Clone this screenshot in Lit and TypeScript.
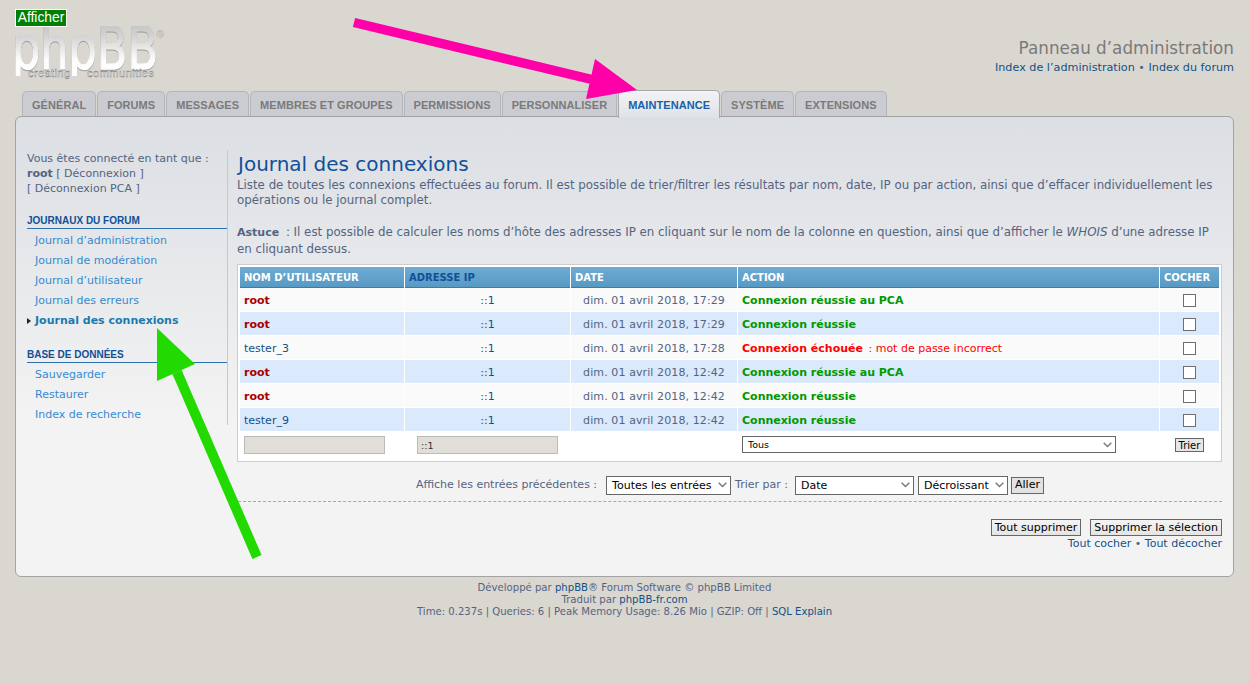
import { LitElement, html, css } from "lit";
import { customElement } from "lit/decorators.js";

const tabs = ["Général","Forums","Messages","Membres et groupes","Permissions","Personnaliser","Maintenance","Système","Extensions"];
const rows = [
  { u: "root", admin: true, d: "dim. 01 avril 2018, 17:29", a: "Connexion réussie au PCA", ok: true },
  { u: "root", admin: true, d: "dim. 01 avril 2018, 17:29", a: "Connexion réussie", ok: true },
  { u: "tester_3", admin: false, d: "dim. 01 avril 2018, 17:28", a: "Connexion échouée", ok: false },
  { u: "root", admin: true, d: "dim. 01 avril 2018, 12:42", a: "Connexion réussie au PCA", ok: true },
  { u: "root", admin: true, d: "dim. 01 avril 2018, 12:42", a: "Connexion réussie", ok: true },
  { u: "tester_9", admin: false, d: "dim. 01 avril 2018, 12:42", a: "Connexion réussie", ok: true },
];

@customElement("app-root")
export class AppRoot extends LitElement {
  static styles = css`
    :host { display: block; position: relative; height: 683px; overflow: hidden; background: #dad7d0; font-family: "DejaVu Sans", Verdana, sans-serif; font-size: 11px; color: #536482; box-sizing: border-box; padding: 0 15px; }
    * { box-sizing: border-box; }
    a { color: #105289; text-decoration: none; }
    .skip { position: absolute; left: 15px; top: 9px; width: 52px; height: 18px; background: #008000; border: 1px solid #fff; color: #fff; font: 13.8px/16px "Liberation Sans", Arial, sans-serif; text-align: center; z-index: 2; }
    .head { height: 91px; display: flex; justify-content: space-between; align-items: flex-start; }
    .logo { display: block; margin-top: 26px; overflow: visible; }
    .lg { filter: drop-shadow(0 1px 0 #999); }
    .brand { margin-top: 39px; text-align: right; }
    .brand h1 { margin: 0; font-size: 16.8px; line-height: 18px; font-weight: normal; color: #7a7a7a; }
    .brand div { font-size: 11.2px; line-height: 14px; margin-top: 4px; }
    .tabs { display: flex; gap: 1px; padding-left: 7px; height: 25px; position: relative; z-index: 1; align-items: flex-end; }
    .tab { height: 25px; padding: 0 9px; background: #cbccd1; border: 1px solid #b4b5ba; border-bottom: none; border-radius: 5px 5px 0 0; font: bold 11px/26px "Liberation Sans", Arial, sans-serif; letter-spacing: .06px; text-transform: uppercase; color: #7a7a7a; white-space: nowrap; }
    .tab.on { height: 28px; margin-bottom: -2px; background: linear-gradient(#f2f3f5, #dfe2e6); border-color: #a8a8a8; color: #1a5fa8; line-height: 28px; }
    .panel { height: 461px; border: 1px solid #a3a3a3; border-radius: 6px; background: linear-gradient(#dbdee3 0, #f3f3f3 300px); padding: 33px 11px 0 11px; display: flex; align-items: flex-start; }
    .side { width: 201px; height: 275px; flex: none; border-right: 1px solid #c6c8cc; }
    .who { line-height: 15px; height: 64px; padding-top: 1px; padding-right: 6px; }
    .who a { color: #536482; }
    .mhead { font: bold 10px/12px "Liberation Sans", Arial, sans-serif; color: #115098; text-transform: uppercase; border-bottom: 1px solid #2a71ad; width: 200px; padding: 1px 0; }
    .menu { padding: 2px 0 0 8px; margin: 0 0 17px; list-style: none; }
    .menu li { height: 20px; line-height: 20px; color: #368ad2; position: relative; }
    .menu li.on { font-weight: bold; color: #1a7ab0; }
    .menu li.on::before { content: ""; position: absolute; left: -8px; top: 7px; border-left: 4px solid #222; border-top: 3px solid transparent; border-bottom: 3px solid transparent; }
    .main { flex: 1; min-width: 0; padding-left: 9px; }
    .main h2 { margin: 0; padding: 2px 0 0 1px; font-size: 20px; line-height: 24px; font-weight: normal; color: #115098; height: 28px; }
    .main p { margin: 0; font-size: 11.8px; }
    .p1 { height: 46px; line-height: 15px; }
    .p2 { height: 40px; line-height: 16px; }
    .p2 b { font-size: 11px; margin-right: 3px; }
    .tw { border: 1px solid #ccc; background: #fff; padding: 2px 1px; height: 198px; }
    table { width: 981px; border-spacing: 1px 0; border-collapse: separate; table-layout: fixed; margin: 0; }
    th { height: 21px; padding: 1px 4px 0; background: linear-gradient(#6dabd2, #5899c4); border-bottom: 1px solid #3f7ba6; font: bold 10px/18px "DejaVu Sans", sans-serif; color: #fff; text-transform: uppercase; text-align: left; white-space: nowrap; }
    th.cur { color: #115098; }
    td { height: 24px; padding: 1px 4px 0; color: #536482; border-bottom: 1px solid #fff; white-space: nowrap; background: #fafafa; }
    tr.alt td { background: #dbe9fc; }
    .adm { color: #a00; font-weight: bold; }
    .usr { color: #105289; }
    .ip { text-align: center; padding-left: 0; padding-right: 0; }
    .dt { text-align: center; letter-spacing: .1px; }
    .ok { color: #090; font-weight: bold; }
    .ko { color: #f00; }
    .ko b { margin-right: 2px; }
    .chk { text-align: center; padding: 1px 0 0; }
    .chk input { appearance: none; margin: 0; width: 13px; height: 13px; vertical-align: middle; background: #fff; border: 1px solid #6e6e6e; }
    .frow td { background: #fff; border: none; height: 26px; padding: 0 4px; }
    .txt { display: block; height: 18px; width: 141px; background: #e1ddd7; border: 1px solid #bbb; padding: 0 3px; font: 9.5px "DejaVu Sans", sans-serif; color: #333; }
    .txt.mid { margin-left: 8px; }
    select { appearance: none; font-family: "DejaVu Sans", sans-serif; font-size: 11px; height: 19px; border: 1px solid #666; color: #000; padding: 0 14px 0 5px; border-radius: 0; background: #fff url("data:image/svg+xml,%3Csvg xmlns='http://www.w3.org/2000/svg' width='9' height='6'%3E%3Cpath d='M.7.7 4.5 4.5 8.3.7' fill='none' stroke='%23777' stroke-width='1.4'/%3E%3C/svg%3E") no-repeat right 3px center; }
    .frow select { display: block; width: 374px; height: 17px; font-size: 9.5px; margin-top: -1px; }
    .btn { font: 11px/14px "DejaVu Sans", sans-serif; background: linear-gradient(#f4f4f4, #e4e4e4); border: 1px solid #666; color: #000; padding: 0 3px; height: 17px; }
    .btn.s { font-size: 10px; width: 29px; height: 14px; padding: 0; line-height: 11px; background: #e6e6e6; display: block; margin: 0 auto; }
    .sort { display: flex; justify-content: flex-end; align-items: center; height: 26px; margin-top: 10px; padding-right: 178px; gap: 4px; }
    .sort span { position: relative; top: -1px; }
    .sort .lead { margin-right: 5px; }
    .sort .par { margin-right: 3px; }
    .sort .go { margin-left: -1px; width: 33px; background: #e2e2e2; padding: 0; }
    .w1 { width: 125px; }
    .w2 { width: 119px; }
    .w3 { width: 90px; }
    .dash { border-top: 1px dashed #a8a8a8; margin-top: 3px; margin-left: 1px; }
    .actions { display: flex; justify-content: flex-end; gap: 9px; margin-top: 17px; }
    .marks { text-align: right; line-height: 14px; margin-top: 1px; }
    footer { text-align: center; font-size: 10.1px; line-height: 12px; margin-top: 5px; color: #536482; }
    .over { position: absolute; left: 0; top: 0; z-index: 3; pointer-events: none; }
  `;

  render() {
    return html`
      <div class="skip">Afficher</div>
      <div class="head">
        <svg class="logo" width="152" height="64" viewBox="0 0 152 64" role="img" aria-label="phpBB">
          <defs>
            <linearGradient id="lg" x1="0" y1="0" x2="0" y2="1">
              <stop offset="0" stop-color="#bcbcbc" />
              <stop offset=".3" stop-color="#d2d2d2" />
              <stop offset=".66" stop-color="#fcfcfc" />
              <stop offset="1" stop-color="#ffffff" />
            </linearGradient>
            <clipPath id="lc"><rect x="-4" y="0" width="156" height="50" /></clipPath>
          </defs>
          <g clip-path="url(#lc)">
            <text class="lg" x="-3" y="43" font-family="DejaVu Sans" font-size="58" textLength="146" lengthAdjust="spacingAndGlyphs" fill="url(#lg)" stroke="url(#lg)" stroke-width="1.5">phpBB</text>
          </g>
          <text x="140" y="12" font-family="DejaVu Sans" font-size="10" fill="#f2f2f2" stroke="#8a8a8a" stroke-width=".25">®</text>
          <text x="13" y="51" font-family="Liberation Sans" font-size="11" fill="#fff" stroke="#777" stroke-width=".4" textLength="42">creating</text>
          <text x="72" y="51" font-family="Liberation Sans" font-size="11" fill="#fff" stroke="#777" stroke-width=".4" textLength="67">communities</text>
        </svg>
        <div class="brand">
          <h1>Panneau d’administration</h1>
          <div><a>Index de l’administration</a> • <a>Index du forum</a></div>
        </div>
      </div>
      <div class="tabs">
        ${tabs.map((t) => html`<div class="tab ${t === "Maintenance" ? "on" : ""}">${t}</div>`)}
      </div>
      <div class="panel">
        <div class="side">
          <div class="who">Vous êtes connecté en tant que :<br /><b>root</b> [ <a>Déconnexion</a> ]<br />[ <a>Déconnexion PCA</a> ]</div>
          <div class="mhead">Journaux du forum</div>
          <ul class="menu">
            <li>Journal d’administration</li>
            <li>Journal de modération</li>
            <li>Journal d’utilisateur</li>
            <li>Journal des erreurs</li>
            <li class="on">Journal des connexions</li>
          </ul>
          <div class="mhead">Base de données</div>
          <ul class="menu">
            <li>Sauvegarder</li>
            <li>Restaurer</li>
            <li>Index de recherche</li>
          </ul>
        </div>
        <div class="main">
          <h2>Journal des connexions</h2>
          <p class="p1">Liste de toutes les connexions effectuées au forum. Il est possible de trier/filtrer les résultats par nom, date, IP ou par action, ainsi que d’effacer individuellement les opérations ou le journal complet.</p>
          <p class="p2"><b>Astuce</b> : Il est possible de calculer les noms d’hôte des adresses IP en cliquant sur le nom de la colonne en question, ainsi que d’afficher le <i>WHOIS</i> d’une adresse IP en cliquant dessus.</p>
          <div class="tw">
            <table>
              <colgroup><col style="width:164px" /><col style="width:165px" /><col style="width:166px" /><col style="width:421px" /><col style="width:59px" /></colgroup>
              <thead><tr><th>Nom d’utilisateur</th><th class="cur">Adresse IP</th><th>Date</th><th>Action</th><th>Cocher</th></tr></thead>
              <tbody>
                ${rows.map((r, i) => html`
                  <tr class="${i % 2 ? "alt" : ""}">
                    <td class="${r.admin ? "adm" : "usr"}">${r.u}</td>
                    <td class="ip"><a>::1</a></td>
                    <td class="dt">${r.d}</td>
                    <td>${r.ok ? html`<span class="ok">${r.a}</span>` : html`<span class="ko"><b>${r.a}</b> : mot de passe incorrect</span>`}</td>
                    <td class="chk"><input type="checkbox" /></td>
                  </tr>`)}
                <tr class="frow">
                  <td><input class="txt" /></td>
                  <td><input class="txt mid" value="::1" /></td>
                  <td></td>
                  <td><select><option>Tous</option></select></td>
                  <td class="chk"><button class="btn s">Trier</button></td>
                </tr>
              </tbody>
            </table>
          </div>
          <div class="sort">
            <span class="lead">Affiche les entrées précédentes :</span>
            <select class="w1"><option>Toutes les entrées</option></select>
            <span class="par">Trier par :</span>
            <select class="w2"><option>Date</option></select>
            <select class="w3"><option>Décroissant</option></select>
            <button class="btn go">Aller</button>
          </div>
          <div class="dash"></div>
          <div class="actions"><button class="btn">Tout supprimer</button><button class="btn">Supprimer la sélection</button></div>
          <div class="marks"><a>Tout cocher</a> • <a>Tout décocher</a></div>
        </div>
      </div>
      <footer>
        <div>Développé par <a>phpBB</a>® Forum Software © phpBB Limited</div>
        <div>Traduit par <a>phpBB-fr.com</a></div>
        <div>Time: 0.237s | Queries: 6 | Peak Memory Usage: 8.26 Mio | GZIP: Off | <a>SQL Explain</a></div>
      </footer>
      <svg class="over" width="1249" height="683" viewBox="0 0 1249 683" aria-hidden="true">
        <path d="M354 22.5 L594 80" stroke="#ff00a8" stroke-width="9.5" fill="none" />
        <polygon points="595,59 637,90 586,99" fill="#ff00a8" />
        <path d="M177 372 L257 557" stroke="#22d900" stroke-width="10" fill="none" />
        <polygon points="157,328 195,364 157,381" fill="#22d900" />
      </svg>
    `;
  }
}
